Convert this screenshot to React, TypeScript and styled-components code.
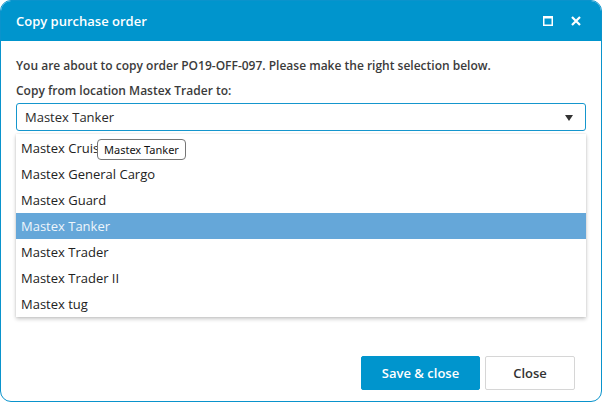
import React from "react";
import styled, { createGlobalStyle } from "styled-components";

const Global = createGlobalStyle`
  html, body { margin: 0; padding: 0; background: #ffffff; }
  body { font-family: "Open Sans", "Liberation Sans", sans-serif; }
  * { box-sizing: border-box; }
`;

const Window = styled.div`
  width: 602px;
  height: 402px;
  border: 1px solid #0a93cc;
  border-radius: 11px;
  overflow: hidden;
  display: flex;
  flex-direction: column;
  background: #fff;
`;

const Header = styled.div`
  height: 40px;
  background: #0095cd;
  display: flex;
  align-items: center;
  padding: 0 15px;
  color: #fff;
`;

const Title = styled.div`
  flex: 1;
  font-size: 13px;
  font-weight: 600;
`;

const HeaderButtons = styled.div`
  display: flex;
  align-items: center;
  gap: 18px;
  padding-right: 5px;
`;

const IconBtn = styled.span`
  display: flex;
  width: 10px;
  height: 10px;
`;

const Content = styled.div`
  flex: 1;
  padding: 16px 15px 0;
  display: flex;
  flex-direction: column;
`;

const Text = styled.div<{ $gap: number }>`
  font-size: 12px;
  font-weight: 600;
  line-height: 18px;
  color: #3b3b3b;
  margin-bottom: ${(p) => p.$gap}px;
`;

const SelectArea = styled.div`
  position: relative;
`;

const SelectBox = styled.div`
  height: 28px;
  border: 1px solid #1596cd;
  border-radius: 3px;
  display: flex;
  align-items: center;
  padding: 0 12px 0 8px;
  font-size: 13px;
  color: #2a2a2a;
`;

const SelectValue = styled.span`
  flex: 1;
`;

const Caret = styled.span`
  width: 0;
  height: 0;
  margin-top: 1px;
  border-left: 4px solid transparent;
  border-right: 4px solid transparent;
  border-top: 6px solid #333;
`;

const List = styled.ul`
  position: absolute;
  left: 0;
  right: 0;
  top: 31px;
  margin: 0;
  padding: 1px 0 0;
  list-style: none;
  background: #fff;
  box-shadow: 0 2px 4px rgba(0, 0, 0, 0.22), 0 0 2px rgba(0, 0, 0, 0.1);
`;

const Item = styled.li<{ $active?: boolean }>`
  height: 26px;
  line-height: 26px;
  padding-left: 5px;
  font-size: 13px;
  color: ${(p) => (p.$active ? "#eef5fb" : "#222")};
  background: ${(p) => (p.$active ? "#65a7d9" : "transparent")};
`;

const Tooltip = styled.div`
  position: absolute;
  left: 81px;
  top: 36px;
  height: 21px;
  padding: 0 6px;
  border: 1px solid #767676;
  border-radius: 4px;
  background: #fff;
  font-family: "Noto Sans", "Liberation Sans", sans-serif;
  font-size: 11px;
  line-height: 19px;
  color: #111;
  white-space: nowrap;
`;

const Footer = styled.div`
  display: flex;
  justify-content: flex-end;
  gap: 5px;
  padding: 0 26px 11px 0;
`;

const Button = styled.button<{ $primary?: boolean }>`
  height: 34px;
  padding: 0;
  width: ${(p) => (p.$primary ? "119px" : "90px")};
  border-radius: 2px;
  border: 1px solid ${(p) => (p.$primary ? "#0095cd" : "#d6d6d6")};
  background: ${(p) => (p.$primary ? "#0095cd" : "#fff")};
  color: ${(p) => (p.$primary ? "#fff" : "#333")};
  font-family: "Open Sans", sans-serif;
  font-size: 13px;
  font-weight: 600;
`;

const items = [
  "Mastex Cruise",
  "Mastex General Cargo",
  "Mastex Guard",
  "Mastex Tanker",
  "Mastex Trader",
  "Mastex Trader II",
  "Mastex tug",
];

export default function App() {
  return (
    <>
      <Global />
      <Window>
        <Header>
          <Title>Copy purchase order</Title>
          <HeaderButtons>
            <IconBtn>
              <svg width="10" height="10" viewBox="0 0 10 10">
                <rect x="0.75" y="0.75" width="8.5" height="8.5" fill="none" stroke="#fff" strokeWidth="1.5" />
                <rect x="0" y="0" width="10" height="2.5" fill="#fff" />
              </svg>
            </IconBtn>
            <IconBtn>
              <svg width="10" height="10" viewBox="0 0 10 10">
                <path d="M1 1 L9 9 M9 1 L1 9" stroke="#fff" strokeWidth="2.2" />
              </svg>
            </IconBtn>
          </HeaderButtons>
        </Header>
        <Content>
          <Text $gap={7}>
            You are about to copy order PO19-OFF-097. Please make the right selection below.
          </Text>
          <Text $gap={3}>Copy from location Mastex Trader to:</Text>
          <SelectArea>
            <SelectBox>
              <SelectValue>Mastex Tanker</SelectValue>
              <Caret />
            </SelectBox>
            <List>
              {items.map((it) => (
                <Item key={it} $active={it === "Mastex Tanker"}>
                  {it}
                </Item>
              ))}
            </List>
            <Tooltip>Mastex Tanker</Tooltip>
          </SelectArea>
        </Content>
        <Footer>
          <Button $primary>Save &amp; close</Button>
          <Button>Close</Button>
        </Footer>
      </Window>
    </>
  );
}
